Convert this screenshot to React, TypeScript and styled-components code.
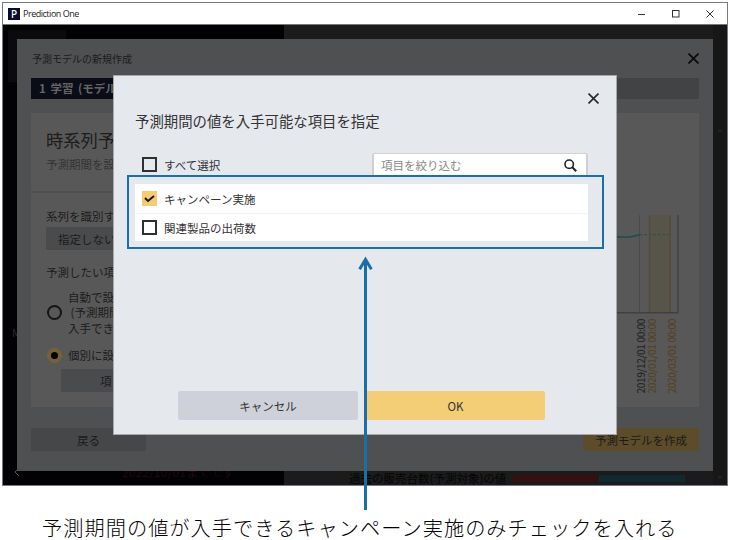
import React from "react";
import styled, { createGlobalStyle, css } from "styled-components";

const GlobalStyle = createGlobalStyle`
  * { box-sizing: border-box; }
  body {
    margin: 0;
    background: #fff;
    overflow: hidden;
    font-family: "Noto Sans CJK JP", "Noto Sans", sans-serif;
  }
  button, input { font-family: inherit; }
`;

const Page = styled.main`
  position: relative;
  width: 730px;
  height: 540px;
  padding: 2px 2px 0;
`;

const AppWindow = styled.section`
  position: relative;
  display: flex;
  flex-direction: column;
  width: 726px;
  height: 484px;
  border: 1px solid #77778a;
  border-top-color: #77778f;
  overflow: hidden;
`;

const TitleBar = styled.header`
  display: flex;
  align-items: center;
  flex: 0 0 22px;
  padding-left: 5px;
  background: #fff;
  border-bottom: 1px solid #777;
`;

const Logo = styled.span`
  display: grid;
  place-items: center;
  width: 12px;
  height: 12px;
  background: #090b2b;
  color: #fff;
  font: 500 10px/12px "Noto Sans", sans-serif;
`;

const AppName = styled.span`
  flex: 1;
  margin-left: 3px;
  color: #222;
  font: 9px/20px "Open Sans", "Noto Sans", sans-serif;
  letter-spacing: -0.48px;
`;

const WindowControls = styled.div`
  display: flex;
  gap: 26px;
  padding-right: 13px;
  svg { display: block; }
`;

const Workspace = styled.div`
  display: flex;
  flex: 1;
  min-height: 0;
`;

const SidePane = styled.aside`
  display: flex;
  flex-direction: column;
  width: 281px;
  padding: 5px 0 0 5px;
  background: #020205;
  overflow: hidden;
`;

const SideTile = styled.div`
  flex: 0 0 52px;
  width: 58px;
  background: #0b0b0d;
`;

const SideLetter = styled.div`
  margin: 240px 0 0 4px;
  height: 20px;
  color: #292929;
  font-size: 11px;
  line-height: 20px;
`;

const SideFooter = styled.div`
  display: flex;
  align-items: center;
  gap: 100px;
  margin-top: 121px;
  padding-left: 4px;
  color: #22070a;
  font-size: 12.2px;
  line-height: 18px;
  white-space: nowrap;
  svg { stroke: #555; }
`;

const MainPane = styled.section`
  display: flex;
  flex: 1;
  align-items: flex-end;
  background: #1b1b1b;
`;

const Legend = styled.div`
  display: flex;
  flex: 1;
  align-items: center;
  height: 14px;
  padding-left: 65px;
  color: #050505;
  font-size: 11.5px;
  white-space: nowrap;
`;

const LegendBar = styled.i<{ $tone: "red" | "teal" }>`
  width: 86px;
  height: 7px;
  margin-left: ${({ $tone }) => ($tone === "red" ? "7px" : "0")};
  background: ${({ $tone }) => ($tone === "red" ? "#35100e" : "#102a30")};
`;

const Scroll = styled.div`
  display: flex;
  flex-direction: column;
  justify-content: space-between;
  align-self: stretch;
  width: 14px;
  padding: 101px 2px 3px;
  background: #171717;
`;

const WizardDialog = styled.section`
  position: absolute;
  left: 14px;
  top: 36px;
  width: 696px;
  height: 432px;
  display: flex;
  flex-direction: column;
  padding: 0 14px 20px 14px;
  background: #4e5052;
  color: #1c1c1c;
`;

const WizardHeader = styled.header`
  display: flex;
  flex: 0 0 39px;
  align-items: center;
  justify-content: space-between;
  padding-left: 1px;
  font-size: 10px;
  line-height: 37px;
`;

const Stepper = styled.div`
  display: flex;
  flex: 0 0 21px;
  background: #424345;
`;

const Step = styled.div`
  width: 230px;
  padding-left: 8px;
  background: #0a0c17;
  color: #656567;
  font-size: 11.5px;
  font-weight: 700;
  line-height: 21px;
  word-spacing: 2px;
`;

const Card = styled.div`
  display: flex;
  flex: 1;
  justify-content: space-between;
  margin: 14px 0 21px;
  min-height: 0;
  background: #585858;
`;

const Settings = styled.div`
  width: 200px;
`;

const SettingsHeader = styled.header`
  height: 80px;
  padding: 14px 0 0 15px;
  border-bottom: 2px solid #505050;
`;

const Heading = styled.h2`
  margin: 0;
  font-size: 17.3px;
  font-weight: 400;
  line-height: 26px;
`;

const Note = styled.p`
  margin: 0;
  color: #333;
  font-size: 11.5px;
  line-height: 23px;
`;

const Label = styled.div<{ $top: number }>`
  margin: ${({ $top }) => $top}px 0 0 15px;
  font-size: 11.5px;
  line-height: 16px;
`;

const dimButton = css`
  border: 0;
  border-radius: 1px;
  padding: 0;
  color: #1b1b1b;
  font-size: 11.5px;
`;

const SelectButton = styled.button<{ $indent: number; $pad: number; $top: number }>`
  ${dimButton}
  display: block;
  width: 130px;
  height: 23px;
  margin: ${({ $top }) => $top}px 0 0 ${({ $indent }) => $indent}px;
  padding-left: ${({ $pad }) => $pad}px;
  background: #4a4b4c;
  text-align: left;
`;

const RadioRow = styled.label<{ $top: number }>`
  display: flex;
  align-items: center;
  gap: 6px;
  margin: ${({ $top }) => $top}px 0 0 16px;
  font-size: 11.5px;
  line-height: 15.3px;
`;

const Radio = styled.span<{ $checked?: boolean }>`
  display: grid;
  place-items: center;
  width: 15px;
  height: 15px;
  border-radius: 50%;
  border: ${({ $checked }) => ($checked ? "0" : "2px solid #151515")};
  background: ${({ $checked }) => ($checked ? "#77613a" : "transparent")};
  &::after {
    content: "";
    width: 7px;
    height: 7px;
    border-radius: 50%;
    background: ${({ $checked }) => ($checked ? "#050505" : "transparent")};
  }
`;

const RadioText = styled.span`
  white-space: pre;
`;

const WizardFooter = styled.footer`
  display: flex;
  flex: 0 0 23px;
  justify-content: space-between;
`;

const FooterButton = styled.button<{ $primary?: boolean }>`
  ${dimButton}
  width: ${({ $primary }) => ($primary ? 116 : 115)}px;
  background: ${({ $primary }) => ($primary ? "#5d4c29" : "#464749")};
`;

const Modal = styled.section`
  position: absolute;
  left: 110px;
  top: 72px;
  width: 504px;
  height: 360px;
  display: flex;
  flex-direction: column;
  padding: 17px 28px 14px 21px;
  border: 1px solid #a6a8ab;
  background: #e5e8ed;
  color: #333;
`;

const ModalClose = styled.div`
  display: flex;
  justify-content: flex-end;
  height: 12px;
  margin-right: -11px;
  svg { display: block; }
`;

const ModalTitle = styled.h1`
  margin: 4px 0 0;
  font-size: 14.4px;
  font-weight: 400;
  line-height: 24px;
`;

const Toolbar = styled.div`
  display: flex;
  align-items: flex-start;
  justify-content: space-between;
  height: 31px;
  margin-top: 20px;
`;

const CheckRow = styled.label<{ $bare?: boolean }>`
  display: flex;
  align-items: center;
  gap: 7px;
  height: ${({ $bare }) => ($bare ? 23 : 29)}px;
  padding-left: 7px;
  font-size: 11.5px;
  & + & { border-top: 1px solid #f3f3f4; height: 28px; }
`;

const CheckBox = styled.span<{ $checked?: boolean }>`
  display: grid;
  place-items: center;
  width: 15px;
  height: 15px;
  border: ${({ $checked }) => ($checked ? "0" : "2px solid #303030")};
  background: ${({ $checked }) => ($checked ? "#f4cc76" : "transparent")};
`;

const Search = styled.div`
  display: flex;
  align-items: center;
  justify-content: space-between;
  width: 216px;
  height: 23px;
  padding: 0 9px 0 7px;
  border: 2px solid #d0d0d0;
  border-width: 1px 2px 0;
  border-radius: 2px 2px 0 0;
  background: #fff;
  color: #888;
  font-size: 11.5px;
`;

const ItemList = styled.div`
  flex: 0 0 57px;
  width: 453px;
  background: #fff;
`;

const Actions = styled.div`
  display: flex;
  gap: 8px;
  margin: auto 0 0 43px;
`;

const ActionButton = styled.button<{ $primary?: boolean }>`
  flex: none;
  width: ${({ $primary }) => ($primary ? 179 : 180)}px;
  height: 29px;
  padding: 0;
  border: 0;
  border-radius: 2px;
  background: ${({ $primary }) => ($primary ? "#f4cd77" : "#ced1d9")};
  color: #333;
  font-size: 11.5px;
`;

const Highlight = styled.div`
  position: absolute;
  left: 127px;
  top: 175px;
  width: 477px;
  height: 74px;
  border: 2px solid #196fa6;
`;

const Arrow = styled.svg`
  position: absolute;
  left: 355px;
  top: 255px;
`;

const Caption = styled.p`
  margin: 30px 0 0 40px;
  color: #000;
  font-size: 20.2px;
  font-weight: 300;
  letter-spacing: 1.04px;
  line-height: 24px;
  white-space: nowrap;
`;

function Cross({ size, color, width = 1 }: { size: number; color: string; width?: number }) {
  return (
    <svg width={size} height={size} viewBox="0 0 10 10" stroke={color} strokeWidth={(width * 10) / size}>
      <path d="M.5 .5 9.5 9.5M9.5 .5.5 9.5" />
    </svg>
  );
}

function Chevron({ d }: { d: string }) {
  return (
    <svg width="10" height="10" viewBox="0 0 10 10" fill="none" stroke="#303030">
      <path d={d} />
    </svg>
  );
}

const chartDates = [
  { x: 645, text: "2019/12/01 00:00", color: "#272727" },
  { x: 655.5, text: "2020/01/01 00:00", color: "#544322" },
  { x: 675.5, text: "2020/03/01 00:00", color: "#544322" },
];

function ForecastChart() {
  return (
    <svg width="99" height="294" viewBox="600 113 99 294" fill="none">
      <rect x="649" y="215" width="21" height="98" fill="#57544a" />
      <path d="M639.5 215V313" stroke="#4b4b4b" />
      <path d="M649.5 215V313M670 215V313" stroke="#554b35" strokeWidth="1.4" />
      <path d="M600 312.7H678V215" stroke="#404040" strokeWidth="1.4" />
      <path d="M600 238 616 236.7 629 237.3 640 234.7" stroke="#1c4d4d" strokeWidth="1.5" />
      <path d="M640 234.7H670" stroke="#2c4d4b" strokeDasharray="2.5 2" />
      {chartDates.map((date) => (
        <text
          key={date.text}
          transform={`translate(${date.x} 393.5) rotate(-90)`}
          fill={date.color}
          fontSize="10"
          fontWeight="500"
          textLength="75"
        >
          {date.text}
        </text>
      ))}
    </svg>
  );
}

export default function App() {
  return (
    <Page>
      <GlobalStyle />
      <AppWindow>
        <TitleBar>
          <Logo>P</Logo>
          <AppName>Prediction One</AppName>
          <WindowControls>
            <svg width="8" height="8"><path d="M0 4.5H7" stroke="#333" /></svg>
            <svg width="8" height="8"><rect x=".5" y=".5" width="6.5" height="6.5" fill="none" stroke="#333" /></svg>
            <Cross size={8} color="#333" />
          </WindowControls>
        </TitleBar>
        <Workspace>
          <SidePane>
            <SideTile />
            <SideLetter>M</SideLetter>
            <SideFooter>
              <Chevron d="M7 1 3 5 7 9" />
              <span>2022/10/01までです</span>
            </SideFooter>
          </SidePane>
          <MainPane>
            <Legend>
              過去の販売台数(予測対象)の値
              <LegendBar $tone="red" />
              <LegendBar $tone="teal" />
            </Legend>
            <Scroll>
              <Chevron d="M3 6 5 4 7 6" />
              <Chevron d="M3 4 5 6 7 4" />
            </Scroll>
          </MainPane>
        </Workspace>

        <WizardDialog>
          <WizardHeader>
            予測モデルの新規作成
            <Cross size={11} color="#080808" width={1.6} />
          </WizardHeader>
          <Stepper>
            <Step>1 学習 (モデル</Step>
          </Stepper>
          <Card>
            <Settings>
              <SettingsHeader>
                <Heading>時系列予</Heading>
                <Note>予測期間を設</Note>
              </SettingsHeader>
              <Label $top={15}>系列を識別す</Label>
              <SelectButton $top={3} $indent={15} $pad={12}>指定しない</SelectButton>
              <Label $top={14}>予測したい項</Label>
              <RadioRow $top={10}>
                <Radio />
                <RadioText>{"自動で設\n (予測期間\n入手でき"}</RadioText>
              </RadioRow>
              <RadioRow $top={12}>
                <Radio $checked />
                <RadioText>個別に設</RadioText>
              </RadioRow>
              <SelectButton $top={6} $indent={30} $pad={39}>項</SelectButton>
            </Settings>
            <ForecastChart />
          </Card>
          <WizardFooter>
            <FooterButton>戻る</FooterButton>
            <FooterButton $primary>予測モデルを作成</FooterButton>
          </WizardFooter>
        </WizardDialog>

        <Modal>
          <ModalClose><Cross size={11} color="#282828" width={1.6} /></ModalClose>
          <ModalTitle>予測期間の値を入手可能な項目を指定</ModalTitle>
          <Toolbar>
            <CheckRow $bare><CheckBox />すべて選択</CheckRow>
            <Search>
              項目を絞り込む
              <svg width="13" height="13" viewBox="0 0 13 13" fill="none" stroke="#222">
                <circle cx="5.2" cy="5.2" r="4.2" strokeWidth="1.6" />
                <path d="M8.3 8.3 12.2 12.2" strokeWidth="2" />
              </svg>
            </Search>
          </Toolbar>
          <ItemList>
            <CheckRow>
              <CheckBox $checked>
                <svg width="11" height="9" viewBox="0 0 11 9" fill="none" stroke="#161616" strokeWidth="1.9">
                  <path d="M1 4 4 7 10 2" />
                </svg>
              </CheckBox>
              キャンペーン実施
            </CheckRow>
            <CheckRow><CheckBox />関連製品の出荷数</CheckRow>
          </ItemList>
          <Actions>
            <ActionButton>キャンセル</ActionButton>
            <ActionButton $primary>OK</ActionButton>
          </Actions>
        </Modal>
      </AppWindow>

      <Caption>予測期間の値が入手できるキャンペーン実施のみチェックを入れる</Caption>

      <Highlight />
      <Arrow width="21" height="256" viewBox="0 0 21 256" fill="none" stroke="#196fa6" strokeWidth="3">
        <path d="M10.5 255V4" />
        <path d="M4.6 14.3 10.5 4.5 16.4 14.3" />
      </Arrow>
    </Page>
  );
}
